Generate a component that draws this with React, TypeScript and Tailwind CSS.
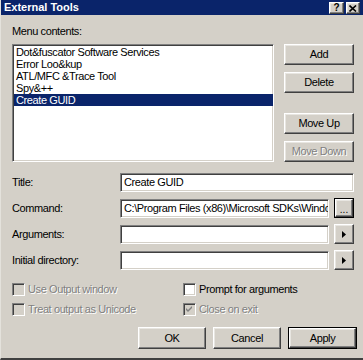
const font = { fontFamily: '"Liberation Sans", Arial, sans-serif' }

const menuItems = [
  'Dot&fuscator Software Services',
  'Error Loo&kup',
  'ATL/MFC &Trace Tool',
  'Spy&++',
  'Create GUID',
]

const sunken =
  'border border-t-[#808080] border-l-[#808080] border-r-white border-b-white shadow-[inset_1px_1px_0_#404040,inset_-1px_-1px_0_#d4d0c8]'
const raised =
  'border border-t-white border-l-white border-r-[#404040] border-b-[#404040] shadow-[inset_-1px_-1px_0_#808080,inset_1px_1px_0_#e8e6e1] bg-[#d4d0c8]'
const disabledText = 'text-[#808080] [text-shadow:1px_1px_0_#ffffff]'

function Button({
  label,
  disabled,
  className = '',
}: {
  label: string
  disabled?: boolean
  className?: string
}) {
  return (
    <div
      className={`${raised} flex items-center justify-center text-[11px] tracking-[-0.4px] ${
        disabled ? disabledText : 'text-black'
      } ${className}`}
    >
      {label}
    </div>
  )
}

function Checkbox({
  label,
  checked,
  disabled,
}: {
  label: string
  checked?: boolean
  disabled?: boolean
}) {
  return (
    <div className="flex items-center gap-[3px] h-[13px]">
      <div
        className={`${sunken} w-[13px] h-[13px] shrink-0 flex items-center justify-center ${
          disabled ? 'bg-[#d4d0c8]' : 'bg-white'
        }`}
      >
        {checked && (
          <svg width="7" height="7" viewBox="0 0 7 7">
            <path
              d="M0 2 L2 4 L6 0 L6 2 L2 6 L0 4 Z"
              fill={disabled ? '#808080' : '#000'}
            />
          </svg>
        )}
      </div>
      <span
        className={`text-[11px] tracking-[-0.4px] leading-[13px] ${
          disabled ? disabledText : 'text-black'
        }`}
      >
        {label}
      </span>
    </div>
  )
}

function FieldRow({
  label,
  value,
  side,
}: {
  label: string
  value?: string
  side?: 'browse' | 'arrow'
}) {
  return (
    <div className="flex items-center h-[20px]">
      <span className="w-[108px] shrink-0 text-[11px] tracking-[-0.4px] text-black">
        {label}
      </span>
      <div
        className={`${sunken} bg-white h-[19px] flex-1 min-w-0 overflow-hidden whitespace-nowrap flex items-center pl-[3px] text-[11px] tracking-[-0.4px] text-black`}
      >
        {value}
      </div>
      {side === 'browse' && (
        <div className="ml-[5px] w-[20px] h-[20px] border border-black shrink-0">
          <div className={`${raised} w-full h-full flex items-center justify-center pt-[4px] text-[10px] leading-[8px] text-black`}>
            ...
          </div>
        </div>
      )}
      {side === 'arrow' && (
        <div className={`${raised} ml-[5px] w-[20px] h-[20px] shrink-0 flex items-center justify-center`}>
          <svg width="4" height="7" viewBox="0 0 4 7">
            <path d="M0 0 L4 3.5 L0 7 Z" fill="#000" />
          </svg>
        </div>
      )}
    </div>
  )
}

export default function App() {
  return (
    <div
      className="w-[363px] h-[360px] bg-[#d4d0c8] flex flex-col border-b-2 border-b-[#404040] border-l border-l-[#e4e2dc] overflow-hidden select-none"
      style={font}
    >
      {/* Title bar */}
      <div className="h-[15px] bg-[#0a246a] flex items-center justify-between pl-[3px] pr-[3px] shrink-0">
        <span className="text-white font-bold text-[11px] leading-[15px]">External Tools</span>
        <div className="flex gap-[2px] mt-[1px]">
          <div className={`${raised} w-[15px] h-[12px] flex items-center justify-center text-[10px] font-bold leading-none text-black`}>
            ?
          </div>
          <div className={`${raised} w-[14px] h-[12px] flex items-center justify-center`}>
            <svg width="8" height="7" viewBox="0 0 8 7">
              <path d="M0.5 0.5 L7 6.5 M7 0.5 L0.5 6.5" stroke="#000" strokeWidth="1.6" />
            </svg>
          </div>
        </div>
      </div>

      <div className="flex flex-col pl-[11px] pr-[9px]">
        <span className="mt-[10px] text-[11px] leading-[13px] tracking-[-0.4px] text-black">
          Menu contents:
        </span>

        <div className="flex mt-[6px]">
          {/* List box */}
          <div className={`${sunken} bg-white w-[262px] h-[118px] pt-[1px] pl-[1px] shrink-0`}>
            {menuItems.map((item, i) => (
              <div
                key={item}
                className={`h-[12px] leading-[12px] pl-[2px] text-[11px] tracking-[-0.4px] whitespace-nowrap ${
                  i === 4 ? 'bg-[#0a246a] text-white' : 'text-black'
                }`}
              >
                {item}
              </div>
            ))}
          </div>

          {/* Side buttons */}
          <div className="flex flex-col ml-[10px] flex-1">
            <Button label="Add" className="h-[21px]" />
            <Button label="Delete" className="h-[21px] mt-[7px]" />
            <Button label="Move Up" className="h-[21px] mt-[20px]" />
            <Button label="Move Down" disabled className="h-[21px] mt-[7px]" />
          </div>
        </div>

        {/* Fields */}
        <div className="flex flex-col gap-[6px] mt-[10px]">
          <FieldRow label="Title:" value="Create GUID" />
          <FieldRow
            label="Command:"
            value="C:\Program Files (x86)\Microsoft SDKs\Windo"
            side="browse"
          />
          <FieldRow label="Arguments:" side="arrow" />
          <FieldRow label="Initial directory:" side="arrow" />
        </div>

        {/* Checkboxes */}
        <div className="grid grid-cols-[171px_1fr] gap-y-[7px] mt-[13px]">
          <Checkbox label="Use Output window" disabled />
          <Checkbox label="Prompt for arguments" />
          <Checkbox label="Treat output as Unicode" disabled />
          <Checkbox label="Close on exit" checked disabled />
        </div>

        {/* Dialog buttons */}
        <div className="flex justify-end gap-[7px] mt-[11px] -mr-[3px]">
          <Button label="OK" className="w-[68px] h-[22px]" />
          <Button label="Cancel" className="w-[68px] h-[22px]" />
          <div className="w-[69px] h-[22px] border border-black">
            <Button label="Apply" className="w-full h-full" />
          </div>
        </div>
      </div>
    </div>
  )
}
